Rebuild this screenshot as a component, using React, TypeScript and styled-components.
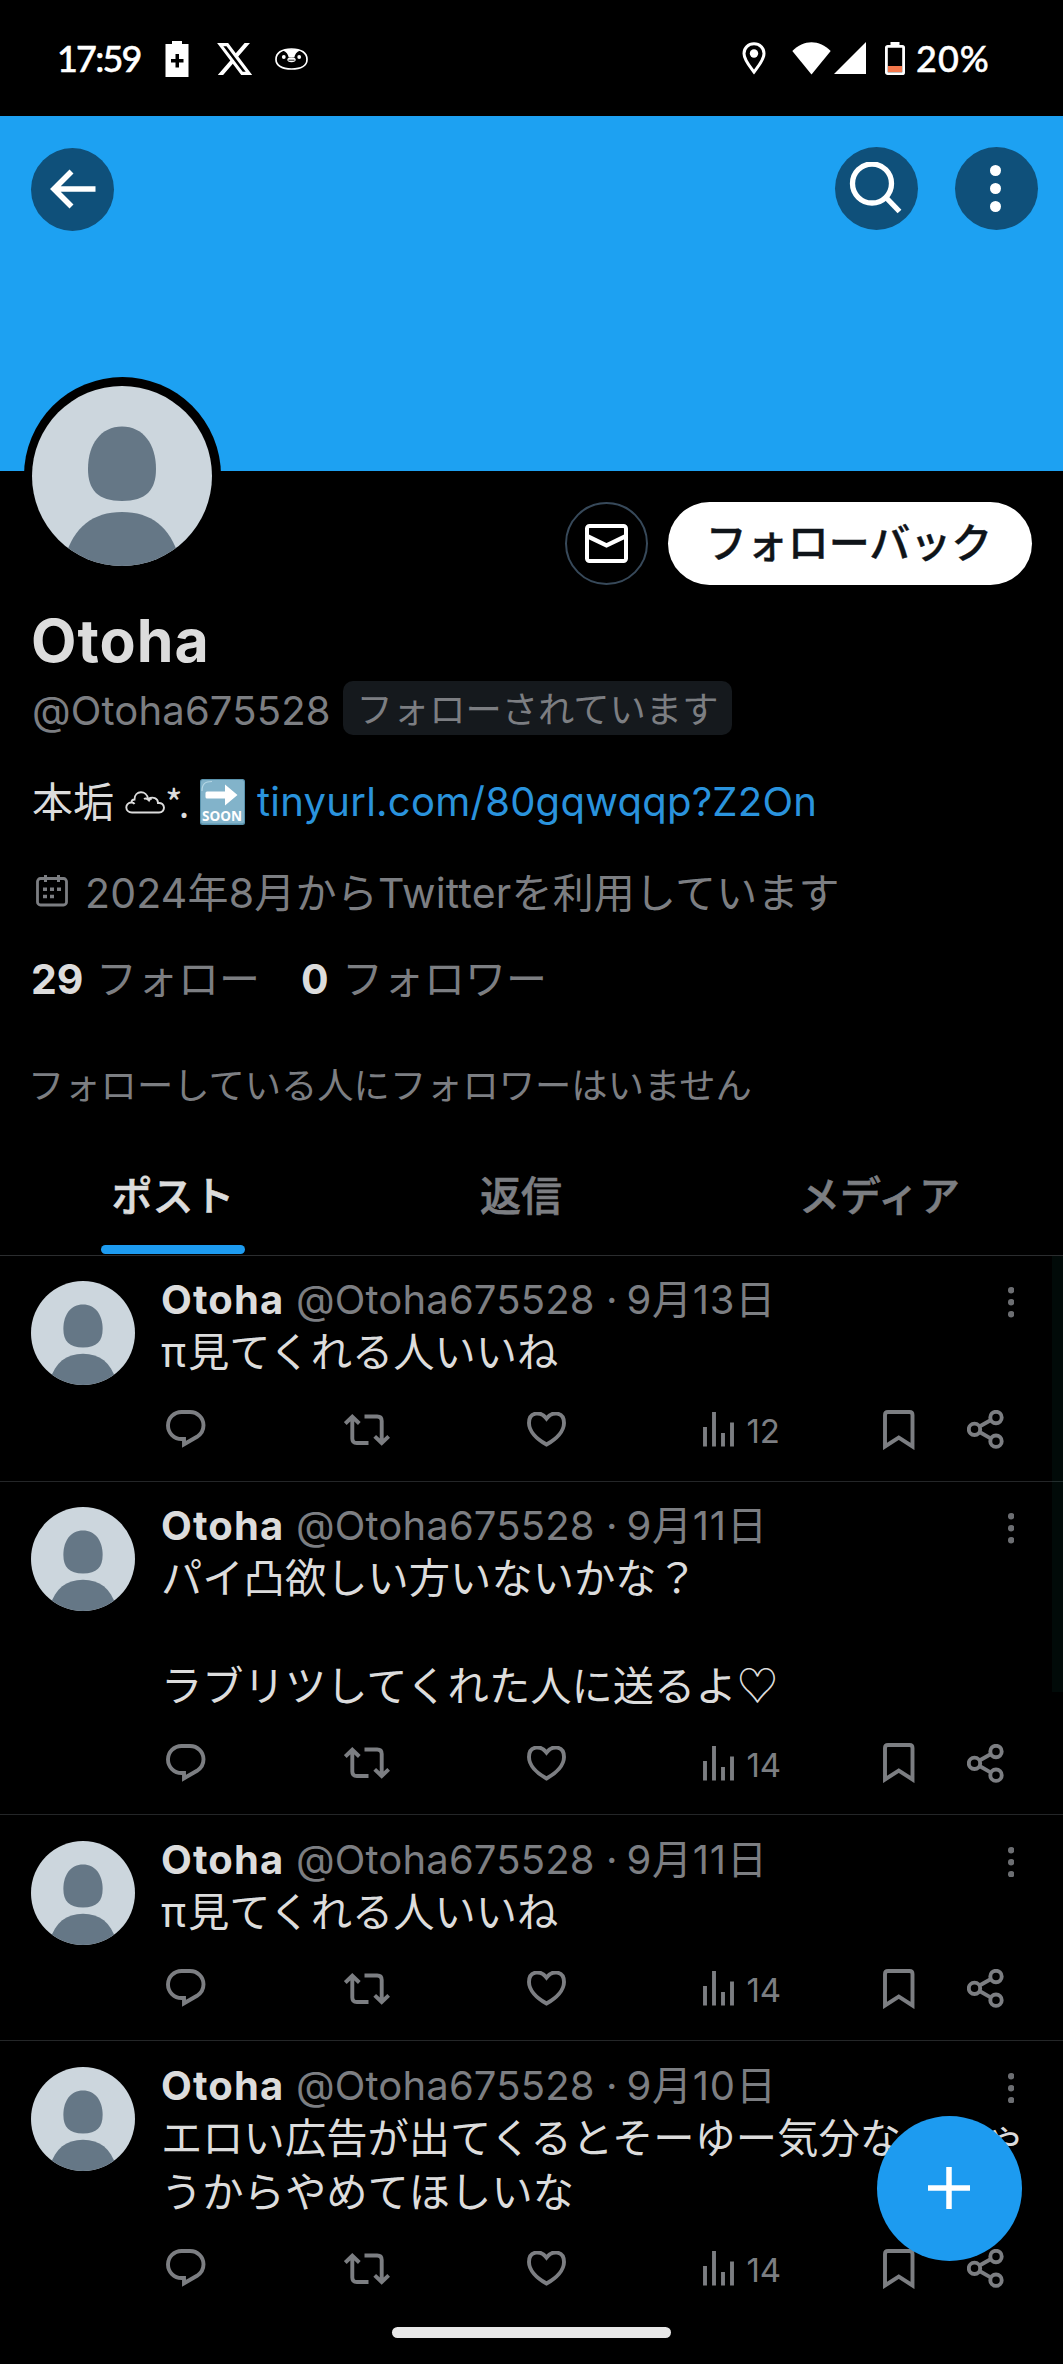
import React from 'react';
import styled, { createGlobalStyle } from 'styled-components';

const GlobalStyle = createGlobalStyle`
  * { box-sizing: border-box; }
  html, body { margin: 0; padding: 0; background: #000; }
  body { font-family: Inter, "Noto Sans CJK JP", sans-serif; }
`;

const muted = '#7c7e82';
const bright = '#dcdcdc';
const blue = '#1d9bf0';

const Screen = styled.main`
  position: relative;
  width: 1063px;
  height: 2364px;
  overflow: hidden;
  background: #000;
  color: ${bright};
  font-size: 41px;
  white-space: nowrap;
  svg { display: block; flex: none; }
`;

/* ---------- Status bar ---------- */
const StatusBar = styled.header`
  display: flex;
  justify-content: space-between;
  align-items: center;
  height: 116px;
  padding: 0 75px 0 57px;
  color: #fff;
`;
const StatusGroup = styled.div`
  display: flex;
  align-items: center;
`;
const StatusText = styled.span<{ $width: number; $spacing: number }>`
  display: block;
  width: ${(p) => p.$width}px;
  font: 500 36px/44px Lato, sans-serif;
  letter-spacing: ${(p) => p.$spacing}px;
  -webkit-text-stroke: 0.5px #fff;
`;
const Slot = styled.span<{ $left: number; $top?: number }>`
  margin-left: ${(p) => p.$left}px;
  padding-top: ${(p) => p.$top ?? 0}px;
`;

/* ---------- Banner ---------- */
const Banner = styled.div`
  display: flex;
  height: 355px;
  padding: 31px 25.5px 0 31px;
  background: #1da1f2;
`;
const RoundButton = styled.button`
  display: flex;
  align-items: center;
  justify-content: center;
  width: 83px;
  height: 83px;
  padding: 0 1px 0 0;
  border: 0;
  border-radius: 50%;
  background: #0f507a;
`;
const BackButton = styled(RoundButton)`
  margin: 0.5px auto 0 0;
  padding: 0;
`;
const MoreButton = styled(RoundButton)`
  margin-left: 37px;
`;

/* ---------- Profile ---------- */
const ProfileTop = styled.div`
  display: flex;
  align-items: flex-start;
  height: 114px;
  padding: 0 31px 0 23.5px;
`;
const AvatarRing = styled.div`
  width: 197px;
  height: 197px;
  margin: -94px auto 0 0;
  padding: 8.5px;
  border-radius: 50%;
  background: #000;
`;
const MailButton = styled.button`
  display: flex;
  align-items: center;
  justify-content: center;
  width: 83px;
  height: 83px;
  margin: 31px 20px 0 0;
  padding: 0;
  border: 2px solid #37495a;
  border-radius: 50%;
  background: #000;
`;
const FollowButton = styled.button`
  width: 364px;
  height: 83px;
  margin-top: 31px;
  padding: 0 2px 6px 0;
  border: 0;
  border-radius: 42px;
  background: #fff;
  color: #0f1419;
  font: 500 41px/77px "Noto Sans CJK JP", sans-serif;
  -webkit-text-stroke: 0.4px #0f1419;
`;
const Profile = styled.section`
  display: flex;
  flex-direction: column;
  padding-left: 31px;
`;
const DisplayName = styled.h1`
  margin: 26px 0 0;
  font-size: 59px;
  line-height: 60px;
  font-weight: 700;
  letter-spacing: 1px;
`;
const HandleRow = styled.div`
  display: flex;
  height: 54px;
  margin-top: 10px;
  color: ${muted};
`;
const Handle = styled.span`
  width: 312px;
  padding: 3px 0 0 1px;
  font-size: 40px;
  line-height: 54px;
  letter-spacing: 0.15px;
`;
const FollowsYou = styled.span`
  width: 389px;
  height: 54px;
  padding-top: 2px;
  border-radius: 10px;
  background: #15191d;
  text-align: center;
  font-size: 36.3px;
  line-height: 54px;
`;
const Bio = styled.div`
  display: flex;
  align-items: center;
  height: 54px;
  margin-top: 40px;
  padding-left: 1px;
  font-size: 41px;
  line-height: 54px;
`;
const BioMark = styled.span`
  width: 35px;
  margin-left: 0;
  font-family: "Noto Sans CJK JP", sans-serif;
  font-size: 38px;
  letter-spacing: -4px;
`;
const Link = styled.a`
  margin-left: 12px;
  color: #2a93dd;
  font-size: 40px;
  letter-spacing: 0.25px;
`;
const SoonLabel = styled.text`
  font: 700 13.5px "Noto Sans", sans-serif;
  fill: #fff;
`;
const Joined = styled.div`
  display: flex;
  align-items: center;
  height: 54px;
  margin-top: 37px;
  padding-left: 5px;
  gap: 17px;
  color: ${muted};
  line-height: 54px;
  letter-spacing: 0.2px;
  svg { margin-bottom: 4px; }
`;
const Counts = styled.div`
  display: flex;
  height: 54px;
  margin-top: 32px;
  color: ${muted};
  line-height: 54px;
`;
const Count = styled.b<{ $width: number }>`
  width: ${(p) => p.$width}px;
  color: ${bright};
`;
const CountLabel = styled.span`
  margin-right: 41px;
`;
const Note = styled.p`
  height: 48px;
  margin: 56px 0 0 -3px;
  color: ${muted};
  font-size: 36.3px;
  line-height: 48px;
`;

/* ---------- Tabs ---------- */
const Tabs = styled.nav`
  display: grid;
  grid-template-columns: 346px 350px 367px;
  height: 121px;
  margin-top: 25px;
  border-bottom: 1px solid #2b2d2f;
`;
const Tab = styled.div<{ $active?: boolean }>`
  display: flex;
  flex-direction: column;
  justify-content: space-between;
  align-items: center;
  padding: 34px 0 1px;
  color: ${(p) => (p.$active ? bright : muted)};
  font-weight: 500;
  line-height: 54px;
  -webkit-text-stroke: 0.6px currentColor;
`;
const Indicator = styled.span`
  width: 144px;
  height: 9px;
  border-radius: 5px;
  background: ${blue};
`;

/* ---------- Posts ---------- */
const Post = styled.article`
  display: flex;
  padding: 25.300px 0 0 31px;
  border-bottom: 1px solid #242628;
  &:last-of-type { border-bottom: 0; }
`;
const PostBody = styled.div`
  flex: 1;
  margin-left: 26px;
`;
const PostHead = styled.div`
  display: flex;
  height: 45.200px;
  font-size: 40px;
  line-height: 37px;
  color: ${muted};
`;
const Author = styled.b`
  width: 135px;
  color: ${bright};
  letter-spacing: 1.1px;
`;
const PostHandle = styled.span`
  width: 310px;
  letter-spacing: 0.15px;
`;
const PostDate = styled.span`
  flex: 1;
  letter-spacing: 0.8px;
  word-spacing: -4px;
`;
const MoreDots = styled.span`
  width: 55px;
  padding-top: 6px;
`;
const PostText = styled.p`
  margin: 0;
  font-size: 41.3px;
  line-height: 53.8px;
  white-space: pre;
`;
const Symbol = styled.span`
  font-family: "Noto Sans CJK JP", sans-serif;
  line-height: 0;
`;
const Pi = styled.span`
  letter-spacing: 2px;
`;
const Actions = styled.div`
  display: grid;
  grid-template-columns: 177.5px 183px 176px 180.5px 83.5px auto;
  align-items: center;
  height: 100.6px;
  padding: 0 0 2px 5px;
  color: ${muted};
`;
const Views = styled.span`
  display: flex;
  align-items: center;
  gap: 12px;
  font-size: 33px;
  line-height: 36px;
  letter-spacing: -0.2px;
`;
const ViewCount = styled.span`
  padding-top: 3px;
`;

/* ---------- Overlays ---------- */
const EdgeGlow = styled.div`
  position: absolute;
  right: 0;
  top: 1256px;
  width: 11px;
  height: 436px;
  background: rgba(20, 140, 120, 0.07);
`;
const Fab = styled.button`
  position: absolute;
  left: 877px;
  top: 2116px;
  display: flex;
  align-items: center;
  justify-content: center;
  width: 145px;
  height: 145px;
  padding: 0 1px 1px 0;
  border: 0;
  border-radius: 50%;
  background: ${blue};
`;
const HomeBar = styled.div`
  position: absolute;
  left: 392px;
  top: 2327px;
  width: 279px;
  height: 11px;
  border-radius: 6px;
  background: #e8e8e8;
`;

/* ---------- Icons ---------- */
const line = { fill: 'none', stroke: 'currentColor', strokeWidth: 3.9 } as const;

const Avatar = ({ size }: { size: number }) => (
  <svg width={size} height={size} viewBox="0 0 180 180">
    <defs>
      <clipPath id={`disc${size}`}>
        <circle cx="90" cy="90" r="90" />
      </clipPath>
    </defs>
    <g clipPath={`url(#disc${size})`}>
      <rect width="180" height="180" fill="#ccd6dd" />
      <path
        d="M90 40.5C111 40.5 124 58 124 83C124 104 114 115 90 115C66 115 56 104 56 83C56 58 69 40.5 90 40.5Z"
        fill="#657786"
      />
      <path d="M90 126C119 126 138 141 147 171L147 182H33V171C42 141 61 126 90 126Z" fill="#657786" />
    </g>
  </svg>
);

const ChargeIcon = () => (
  <svg width="24" height="36" viewBox="0 0 24 36">
    <path d="M7 0H17V3H23.5V36H.5V3H7ZM10.5 13V18H6V21.5H10.5V26.500H14V21.500H18.500V18H14V13Z" fill="#fff" fillRule="evenodd" />
  </svg>
);
const XIcon = () => (
  <svg width="35" height="32" viewBox="1.200 2.200 21.600 19.600" preserveAspectRatio="none">
    <path
      fill="#fff"
      d="M18.244 2.25h3.308l-7.227 8.26 8.502 11.24H16.17l-5.214-6.817L4.99 21.75H1.68l7.73-8.835L1.254 2.25H8.08l4.713 6.231zm-1.161 17.52h1.833L7.084 4.126H5.117z"
    />
  </svg>
);
const PenguinIcon = () => (
  <svg width="33" height="22" viewBox="0 0 33 22">
    <path d="M16.500 1C26.500 1 32 5 32 11.500C32 17.500 26 21 16.500 21C7 21 1 17.500 1 11.500C1 5 6.500 1 16.500 1Z" fill="#000" stroke="#fff" strokeWidth="1.700" />
    <path d="M8 2.500C12 .8 21 .8 25 2.500C21.500 4 20 6 19.300 9.500H13.700C13 6 11.500 4 8 2.500Z" fill="#fff" />
    <circle cx="8.800" cy="9" r="1.900" fill="#fff" />
    <circle cx="24.200" cy="9" r="1.900" fill="#fff" />
    <ellipse cx="16.500" cy="11.800" rx="4.200" ry="2.400" fill="#fff" />
    <path d="M13.500 12.200H19.500" stroke="#000" strokeWidth=".9" />
  </svg>
);
const PinIcon = () => (
  <svg width="24" height="33" viewBox="0 0 24 33">
    <path d="M12 1.800C17.800 1.800 22 6 22 11.500C22 18 16 24.500 12 30C8 24.500 2 18 2 11.500C2 6 6.200 1.800 12 1.800Z" fill="none" stroke="#fff" strokeWidth="3" />
    <circle cx="12" cy="11.500" r="4.200" fill="#fff" />
  </svg>
);
const WifiIcon = () => (
  <svg width="39" height="33" viewBox="0 0 39 33">
    <path d="M.3 9C11.500-2.600 27.500-2.600 38.700 9L19.500 32.500Z" fill="#fff" />
  </svg>
);
const SignalIcon = () => (
  <svg width="32" height="32" viewBox="0 0 32 32">
    <path d="M32 0V32H0Z" fill="#fff" />
  </svg>
);
const BatteryIcon = () => (
  <svg width="20" height="33" viewBox="0 0 20 33">
    <path d="M5.500 0H14.500V4H5.500Z" fill="#fff" />
    <rect x="1.400" y="4.400" width="17.200" height="27.200" rx="1.200" fill="none" stroke="#fff" strokeWidth="2.800" />
    <rect x="3" y="24" width="14" height="6" fill="#f4784c" />
  </svg>
);
const BackIcon = () => (
  <svg width="46" height="40" viewBox="0 0 46 40">
    <path d="M21.500 2.500L4 20L21.500 37.500M4 20H45.500" fill="none" stroke="#fff" strokeWidth="5.600" />
  </svg>
);
const SearchIcon = () => (
  <svg width="54" height="54" viewBox="0 0 54 54">
    <circle cx="23" cy="21.500" r="19.500" fill="none" stroke="#fff" strokeWidth="5.300" />
    <path d="M36.500 35L50.500 49.500" stroke="#fff" strokeWidth="5.300" />
  </svg>
);
const Dots = ({ r, gap }: { r: number; gap: number }) => (
  <svg width={r * 2} height={gap * 2 + r * 2} fill="currentColor" color={r > 4 ? '#fff' : '#6c6e72'}>
    {[0, 1, 2].map((i) => (
      <circle key={i} cx={r} cy={r + i * gap} r={r} />
    ))}
  </svg>
);
const MailIcon = () => (
  <svg width="43" height="39" viewBox="0 0 43 39">
    <rect x="2" y="2" width="39" height="35" rx="2.500" fill="none" stroke="#fff" strokeWidth="4" />
    <path d="M3 12.500L21.500 21.500L40 12.500" fill="none" stroke="#fff" strokeWidth="4.200" />
  </svg>
);
const CloudIcon = () => (
  <svg width="40" height="23" viewBox="0 0 40 23">
    <path
      d="M7 21.500C-.5 21.500-.5 11.500 6.500 11.500C6.500 9.500 8 8.500 9.500 8.500C9.500-1 22-1 23 8C28 5 33 7.500 33 12C40.500 11 41 21.500 34 21.500ZM6.500 11.500C8 11.500 9 12 9.500 13M19 8C20.500 7 22.500 7.500 24 9.500C25 7.500 26 7.500 27 7.500"
      fill="none"
      stroke={bright}
      strokeWidth="1.900"
    />
  </svg>
);
const SoonIcon = () => (
  <svg width="45" height="46" viewBox="0 0 45 46">
    <rect width="45" height="46" rx="2.500" fill="#5a93ad" />
    <rect x="1" y="1" width="43" height="43.500" rx="2" fill="#82b3ca" />
    <path d="M2 12C2 5 5 2.500 12 2.500" fill="none" stroke="#b5d7e5" strokeWidth="1.200" />
    <path d="M7 12.500H25V5.500L37.500 16L25 26.500V19.500H7Q5.500 19.500 5.500 18V14Q5.500 12.500 7 12.500Z" fill="#fff" />
    <SoonLabel x="2" y="41.500" textLength="40" lengthAdjust="spacingAndGlyphs">SOON</SoonLabel>
  </svg>
);
const CalendarIcon = () => (
  <svg width="32" height="32" viewBox="0 0 32 32">
    <rect x="1.500" y="3.500" width="29" height="26.500" rx="3" fill="none" stroke={muted} strokeWidth="2.800" />
    <path d="M9.500 0V7M22.500 0V7" stroke={muted} strokeWidth="3" />
    <path d="M7 14.200H11M14 14.200H18M21 14.200H25M7 21.500H11M14 21.500H18" stroke={muted} strokeWidth="3.600" />
  </svg>
);
const ReplyIcon = () => (
  <svg width="40" height="39" viewBox="0 0 40 39">
    <path {...line} d="M15.500 2H24C31.500 2 37.500 8 37.500 15.300C37.500 20.500 35 24.300 31 26.800L18 34.300V29H15.500C8 29 2 23 2 15.500C2 8 8 2 15.500 2Z" />
  </svg>
);
const RepostIcon = () => (
  <svg width="46" height="32" viewBox="0 0 46 32">
    <path {...line} d="M1.300 9.500L8.300 2.800L15.300 9.500M8.300 3V24.500Q8.300 29 12.800 29H24.500M20.500 2.500H33.200Q37.700 2.500 37.700 7V29M30.700 22.300L37.700 29L44.700 22.300" />
  </svg>
);
const HeartIcon = () => (
  <svg width="39" height="35" viewBox="0 0 39 35">
    <path {...line} d="M19.500 6.500C14-1 2-.5 2 11C2 19 9.500 27 19.500 32.500C29.500 27 37 19 37 11C37-.5 25-1 19.500 6.500Z" />
  </svg>
);
const ViewsIcon = () => (
  <svg width="32" height="35" viewBox="0 0 32 35">
    <path {...line} d="M2 15V34.500M11 0V34.500M20 21V34.500M29 10.500V34.500" />
  </svg>
);
const BookmarkIcon = () => (
  <svg width="32" height="40" viewBox="0 0 32 40">
    <path {...line} d="M2 36.500V5Q2 2 5 2H26.500Q29.500 2 29.500 5V36.500L15.750 27.500Z" />
  </svg>
);
const ShareIcon = () => (
  <svg width="38" height="39" viewBox="0 0 38 39">
    <path {...line} d="M12.500 16.500L24 10M12.500 22L24 28.600" />
    <circle {...line} cx="7.500" cy="19.300" r="5.700" />
    <circle {...line} cx="29" cy="7.500" r="5.700" />
    <circle {...line} cx="29" cy="31.200" r="5.700" />
  </svg>
);

const posts = [
  { date: '9月13日', lead: 'π', text: '見てくれる人いいね', views: 12 },
  { date: '9月11日', text: 'パイ凸欲しい方いないかな？\n\nラブリツしてくれた人に送るよ', symbol: '♡', views: 14 },
  { date: '9月11日', lead: 'π', text: '見てくれる人いいね', views: 14 },
  { date: '9月10日', text: 'エロい広告が出てくるとそーゆー気分なっちゃ\nうからやめてほしいな', views: 14 },
];

export default function App() {
  return (
    <Screen>
      <GlobalStyle />
      <StatusBar>
        <StatusGroup>
          <StatusText $width={83} $spacing={-1.8}>17:59</StatusText>
          <Slot $left={25} $top={2}><ChargeIcon /></Slot>
          <Slot $left={28} $top={2}><XIcon /></Slot>
          <Slot $left={23} $top={2}><PenguinIcon /></Slot>
        </StatusGroup>
        <StatusGroup>
          <Slot $left={0}><PinIcon /></Slot>
          <Slot $left={26}><WifiIcon /></Slot>
          <Slot $left={3}><SignalIcon /></Slot>
          <Slot $left={19}><BatteryIcon /></Slot>
          <Slot $left={11}><StatusText $width={72} $spacing={1}>20%</StatusText></Slot>
        </StatusGroup>
      </StatusBar>

      <Banner>
        <BackButton><BackIcon /></BackButton>
        <RoundButton><SearchIcon /></RoundButton>
        <MoreButton><Dots r={5.5} gap={18} /></MoreButton>
      </Banner>

      <ProfileTop>
        <AvatarRing><Avatar size={180} /></AvatarRing>
        <MailButton><MailIcon /></MailButton>
        <FollowButton>フォローバック</FollowButton>
      </ProfileTop>

      <Profile>
        <DisplayName>Otoha</DisplayName>
        <HandleRow>
          <Handle>@Otoha675528</Handle>
          <FollowsYou>フォローされています</FollowsYou>
        </HandleRow>
        <Bio>
          <span>本垢</span>
          <Slot $left={11}><CloudIcon /></Slot>
          <BioMark>*.</BioMark>
          <SoonIcon />
          <Link>tinyurl.com/80gqwqqp?Z2On</Link>
        </Bio>
        <Joined>
          <CalendarIcon />
          <span>2024年8月からTwitterを利用しています</span>
        </Joined>
        <Counts>
          <Count $width={65}>29</Count>
          <CountLabel>フォロー</CountLabel>
          <Count $width={41}>0</Count>
          <CountLabel>フォロワー</CountLabel>
        </Counts>
        <Note>フォローしている人にフォロワーはいません</Note>
      </Profile>

      <Tabs>
        <Tab $active>ポスト<Indicator /></Tab>
        <Tab>返信</Tab>
        <Tab>メディア</Tab>
      </Tabs>

      {posts.map((post, i) => (
        <Post key={i}>
          <Avatar size={104} />
          <PostBody>
            <PostHead>
              <Author>Otoha</Author>
              <PostHandle>@Otoha675528</PostHandle>
              <PostDate>· {post.date}</PostDate>
              <MoreDots><Dots r={3.2} gap={12} /></MoreDots>
            </PostHead>
            <PostText>
              {post.lead && <Pi>{post.lead}</Pi>}
              {post.text}
              {post.symbol && <Symbol>{post.symbol}</Symbol>}
            </PostText>
            <Actions>
              <ReplyIcon />
              <RepostIcon />
              <HeartIcon />
              <Views><ViewsIcon /><ViewCount>{post.views}</ViewCount></Views>
              <BookmarkIcon />
              <ShareIcon />
            </Actions>
          </PostBody>
        </Post>
      ))}

      <EdgeGlow />
      <Fab>
        <svg width="42" height="42" viewBox="0 0 42 42">
          <path d="M21 0V42M0 21H42" stroke="#fff" strokeWidth="5.500" />
        </svg>
      </Fab>
      <HomeBar />
    </Screen>
  );
}
